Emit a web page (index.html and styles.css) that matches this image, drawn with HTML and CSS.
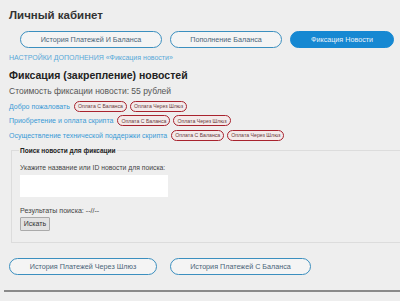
FILE: index.html
```html
<!DOCTYPE html>
<html lang="ru">
<head>
<meta charset="utf-8">
<link rel="stylesheet" href="styles.css">
</head>
<body>
<div class="page">
  <h1 class="title">Личный кабинет</h1>
  <nav class="tabs">
    <a class="tab w1">История Платежей И Баланса</a>
    <a class="tab w2">Пополнение Баланса</a>
    <a class="tab w3 active">Фиксация Новости</a>
  </nav>
  <div class="crumb">НАСТРОЙКИ ДОПОЛНЕНИЯ «Фиксация новости»</div>
  <h2 class="heading">Фиксация (закрепление) новостей</h2>
  <div class="cost">Стоимость фиксации новости: 55 рублей</div>
  <div class="rows">
    <div class="row"><a class="link">Добро пожаловать</a><span class="badge">Оплата С Баланса</span><span class="badge">Оплата Через Шлюз</span></div>
    <div class="row"><a class="link">Приобретение и оплата скрипта</a><span class="badge">Оплата С Баланса</span><span class="badge">Оплата Через Шлюз</span></div>
    <div class="row"><a class="link">Осуществление технической поддержки скрипта</a><span class="badge">Оплата С Баланса</span><span class="badge">Оплата Через Шлюз</span></div>
  </div>
  <fieldset class="box">
    <legend class="legend">Поиск новости для фиксации</legend>
    <div class="label">Укажите название или ID новости для поиска:</div>
    <div class="input"></div>
    <div class="result">Результаты поиска: --//--</div>
    <button class="btn">Искать</button>
  </fieldset>
  <div class="bottom">
    <a class="tab b1">История Платежей Через Шлюз</a>
    <a class="tab b2">История Платежей С Баланса</a>
  </div>
  <div class="rule"></div>
</div>
</body>
</html>
```
FILE: styles.css
```css
html, body { margin: 0; padding: 0; }
body {
  background: #eeeeee;
  font-family: "Liberation Sans", Arial, sans-serif;
  color: #333;
  width: 400px;
  height: 301px;
  overflow: hidden;
}
.page { padding: 0 0 0 9px; }
.title {
  margin: 0;
  padding-top: 6px;
  font-size: 11.5px;
  font-weight: 700;
  line-height: 18px;
  color: #333;
}
.tabs {
  display: flex;
  gap: 8px;
  margin-top: 7px;
  padding-left: 11px;
}
.tab {
  display: flex;
  align-items: center;
  justify-content: center;
  box-sizing: border-box;
  height: 17px;
  border: 1.5px solid #3b8fbf;
  border-radius: 9px;
  font-size: 7.2px;
  color: #4a6478;
  background: #f4f4f4;
}
.w1 { width: 142px; }
.w2 { width: 112px; }
.w3 { width: 104px; }
.tab.active {
  background: #1688d2;
  border-color: #1688d2;
  color: #e8f2fa;
}
.crumb {
  margin-top: 5px;
  font-size: 7px;
  line-height: 10px;
  color: #58a8d8;
}
.heading {
  margin: 4px 0 0 0;
  font-size: 10.5px;
  line-height: 16px;
  font-weight: 700;
  color: #222;
}
.cost {
  margin-top: 2px;
  font-size: 8.5px;
  line-height: 12px;
  color: #555;
}
.rows { margin-top: 2px; }
.row {
  display: flex;
  align-items: center;
  gap: 3px;
  height: 14.5px;
}
.link {
  font-size: 7px;
  color: #3a9ad6;
  margin-right: 1px;
}
.badge {
  display: inline-flex;
  align-items: center;
  box-sizing: border-box;
  height: 11px;
  padding: 0 3px;
  border: 1.5px solid #a8232e;
  border-radius: 6px;
  font-size: 5.2px;
  color: #6a3a3a;
  background: #f3eaea;
}
.box {
  margin: 4px 0 0 2px;
  padding: 0 0 8px 8px;
  border: 1px solid #dcdcdc;
  border-right: none;
  min-width: 0;
  height: 96px;
  box-sizing: border-box;
}
.legend {
  padding: 0 1px;
  margin-left: -1px;
  font-size: 6.5px;
  font-weight: 700;
  color: #222;
}
.label {
  margin-top: 9px;
  font-size: 6.8px;
  line-height: 10px;
  color: #444;
}
.input {
  margin-top: 2px;
  width: 148px;
  height: 22px;
  background: #fff;
}
.result {
  margin-top: 9px;
  font-size: 7.1px;
  line-height: 10px;
  color: #444;
}
.btn {
  display: block;
  margin-top: 1px;
  width: 30px;
  height: 14px;
  padding: 0;
  font-family: inherit;
  font-size: 7px;
  color: #333;
  background: #e2e2e2;
  border: 1px solid #aaa;
  border-radius: 1px;
}
.bottom {
  display: flex;
  gap: 13px;
  margin-top: 15px;
}
.b1 { width: 148px; }
.b2 { width: 141px; }
.rule {
  margin: 15px 0 0 -5px;
  height: 2px;
  background: #8a8a8a;
}
```
